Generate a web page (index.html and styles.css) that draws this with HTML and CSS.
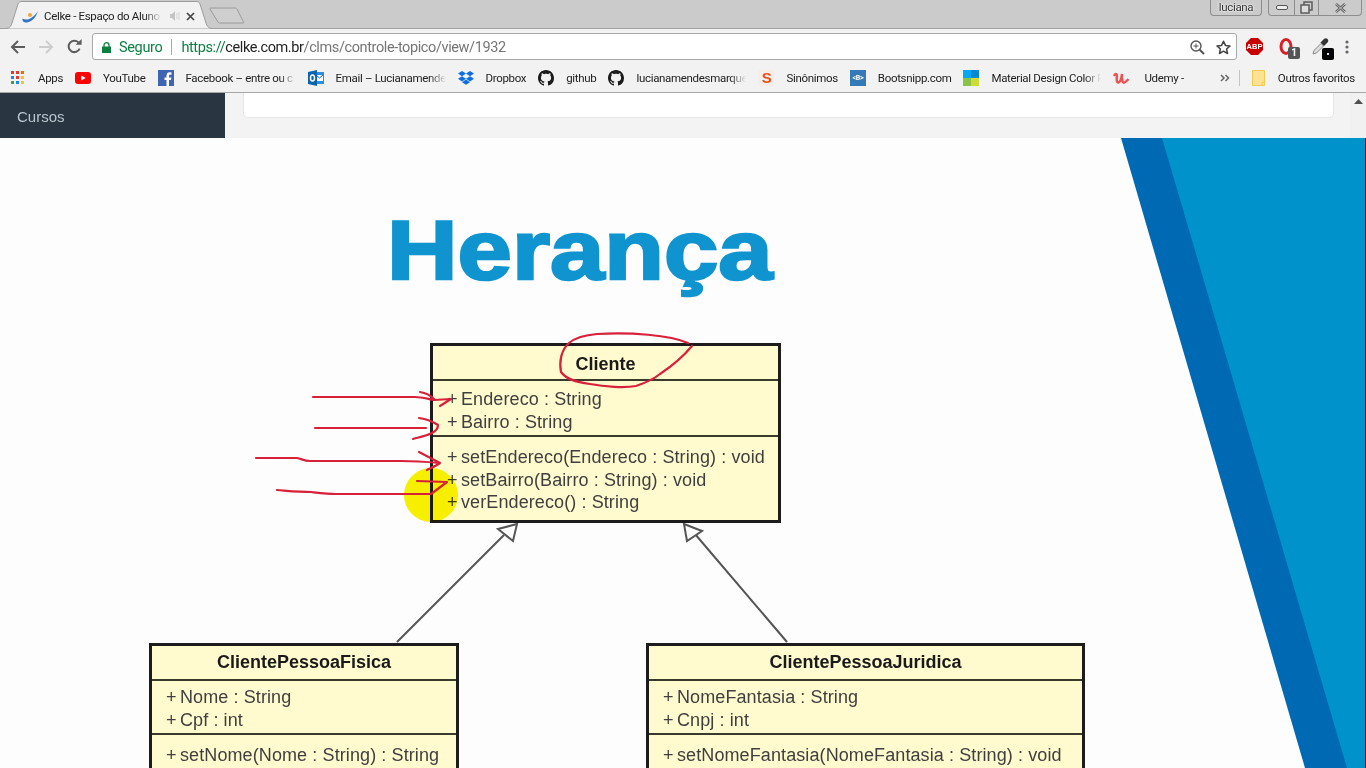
FILE: index.html
```html
<!DOCTYPE html>
<html lang="pt-BR">
<head>
    <meta charset="UTF-8">
    <meta name="viewport" content="width=device-width, initial-scale=1.0">
    <title>Celke - Espaço do Aluno</title>
    <link rel="stylesheet" href="styles.css">
</head>
<body>
    <svg class="defs" width="0" height="0">
        <symbol id="octocat" viewBox="0 0 16 16">
            <path fill="#1b1b1b" d="M8 0C3.58 0 0 3.58 0 8c0 3.54 2.29 6.53 5.47 7.59.4.07.55-.17.55-.38 0-.19-.01-.82-.01-1.49-2.01.37-2.53-.49-2.69-.94-.09-.23-.48-.94-.82-1.13-.28-.15-.68-.52-.01-.53.63-.01 1.08.58 1.23.82.72 1.21 1.87.87 2.33.66.07-.52.28-.87.51-1.07-1.78-.2-3.64-.89-3.64-3.95 0-.87.31-1.59.82-2.15-.08-.2-.36-1.02.08-2.12 0 0 .67-.21 2.2.82.64-.18 1.32-.27 2-.27.68 0 1.36.09 2 .27 1.53-1.04 2.2-.82 2.2-.82.44 1.1.16 1.92.08 2.12.51.56.82 1.27.82 2.15 0 3.07-1.87 3.75-3.65 3.95.29.25.54.73.54 1.48 0 1.07-.01 1.93-.01 2.2 0 .21.15.46.55.38A8.013 8.013 0 0016 8c0-4.42-3.58-8-8-8z"/>
        </symbol>
    </svg>

    <div class="tabstrip">
        <div class="tab">
            <svg class="tab-shape" width="206" height="29" viewBox="0 0 206 29">
                <path d="M0 28.500 C4 28 5 26 6 23 L12 4 C13 2 14 1.500 16 1.500 L190 1.500 C192 1.500 193 2 194 4 L200 23 C201 26 202 28 206 28.500" fill="#f2f2f2" stroke="#9c9c9c"/>
            </svg>
            <svg class="tab-icon" width="16" height="13" viewBox="0 0 16 13">
                <path d="M.5 8.500C0 12 3 13 6 12.300 10 11.300 14 7.500 16 1 13 5.500 9 9 5.500 9.500 3.500 9.800 1.800 9.500.5 8.500z" fill="#2f74c8"/>
                <circle cx="8" cy="5" r="2" fill="#f2a23a"/>
            </svg>
            <span class="tab-title">Celke - Espaço do Aluno</span>
            <svg class="tab-sound" width="10" height="10" viewBox="0 0 10 10">
                <path d="M0 3h2l3-3v10L2 7H0z" fill="#c4c4c4"/>
                <path d="M7 2v6M9 1v8" stroke="#d4d4d4"/>
            </svg>
            <svg class="tab-close" width="9" height="9" viewBox="0 0 9 9">
                <path d="M1 1l7 7M8 1L1 8" stroke="#444" stroke-width="1.700"/>
            </svg>
        </div>
        <svg class="newtab" width="36" height="18" viewBox="0 0 36 18">
            <path d="M1 2 C1 1 1 1 2 1 L26 1 C27 1 27 1 28 2 L34 14 C35 16 35 16 33 16 L11 16 C10 16 10 16 9 15 Z" fill="#cfcfcf" stroke="#9a9a9a"/>
        </svg>
        <div class="window-user">luciana</div>
        <div class="window-btns">
            <div class="window-btn min"><svg width="12" height="6" viewBox="0 0 12 6"><rect x="0.500" y="0.500" width="11" height="4" rx="1.500" fill="#eee" stroke="#555"/></svg></div>
            <div class="window-btn max"><svg width="13" height="13" viewBox="0 0 13 13"><rect x="4" y="1" width="8" height="8" fill="none" stroke="#555" stroke-width="1.400"/><rect x="1" y="4" width="8" height="8" fill="#ddd" stroke="#555" stroke-width="1.400"/></svg></div>
            <div class="window-btn close"><svg width="13" height="10" viewBox="0 0 13 10"><path d="M2 1l9 8M11 1l-9 8" stroke="#555" stroke-width="2.400"/><path d="M2 1l9 8M11 1l-9 8" stroke="#eee" stroke-width="0.800"/></svg></div>
        </div>
    </div>

    <div class="toolbar">
        <button class="nav-btn"><svg width="16" height="14" viewBox="0 0 16 14"><path d="M15 7H2M8 1L2 7l6 6" fill="none" stroke="#5c5c5c" stroke-width="2"/></svg></button>
        <button class="nav-btn"><svg width="16" height="14" viewBox="0 0 16 14"><path d="M1 7h13M8 1l6 6-6 6" fill="none" stroke="#cdcdcd" stroke-width="2"/></svg></button>
        <button class="nav-btn"><svg width="15" height="15" viewBox="0 0 15 15"><path d="M12.600 9.600A5.700 5.700 0 1 1 11.400 3.400" fill="none" stroke="#5c5c5c" stroke-width="2"/><path d="M8.600 5.800H14.600V0z" fill="#5c5c5c"/></svg></button>
        <div class="omnibox">
            <svg class="lock" width="9" height="11" viewBox="0 0 9 11"><path d="M2 5V3.200a2.500 2.500 0 0 1 5 0V5" fill="none" stroke="#0b8043" stroke-width="1.300"/><rect y="4.500" width="9" height="6.500" fill="#0b8043"/></svg>
            <span class="secure">Seguro</span>
            <span class="omni-sep"></span>
            <span class="url"><span class="url-scheme">https://</span><span class="url-host">celke.com.br</span>/clms/controle-topico/view/1932</span>
            <svg class="omni-zoom" width="15" height="15" viewBox="0 0 15 15"><circle cx="6" cy="6" r="5" fill="none" stroke="#555" stroke-width="1.400"/><path d="M9.700 9.700L14 14" stroke="#555" stroke-width="2"/><path d="M3.500 6h5M6 3.500v5" stroke="#555"/></svg>
            <svg class="omni-star" width="15" height="15" viewBox="0 0 15 15"><path d="M7.500 1.200l1.900 4.200 4.600.5-3.400 3.100.9 4.500-4-2.300-4 2.300.9-4.500L1 5.900l4.600-.5z" fill="none" stroke="#444" stroke-width="1.500" stroke-linejoin="round"/></svg>
        </div>
        <div class="extensions">
            <svg class="ext-abp" width="17" height="17" viewBox="0 0 17 17">
                <path d="M5 0h7l5 5v7l-5 5H5l-5-5V5z" fill="#c80000"/>
                <text x="8.500" y="11.200" text-anchor="middle">ABP</text>
            </svg>
            <div class="ext-opera">
                <svg width="15" height="17" viewBox="0 0 15 17"><ellipse cx="7" cy="8.500" rx="5" ry="7" fill="none" stroke="#d81f26" stroke-width="3"/></svg>
                <span class="ext-badge">1</span>
            </div>
            <div class="ext-dropper">
                <svg width="17" height="17" viewBox="0 0 17 17"><path d="M1 16l1-3.500 7-7 2.500 2.500-7 7z" fill="#ddd" stroke="#888"/><path d="M8.500 4.500l3.500-3.500c1-1 2.500-1 3.500 0s1 2.500 0 3.500L12 8z" fill="#333"/></svg>
                <span class="ext-black"><span class="ext-dot"></span></span>
            </div>
            <svg class="menu-dots" width="4" height="14" viewBox="0 0 4 14"><circle cx="2" cy="2" r="1.600" fill="#666"/><circle cx="2" cy="7" r="1.600" fill="#666"/><circle cx="2" cy="12" r="1.600" fill="#666"/></svg>
        </div>
    </div>

    <div class="bookmarks">
        <a class="bm bm-apps">
            <svg width="13" height="13" viewBox="0 0 13 13">
                <rect width="3" height="3" fill="#e53935"/><rect x="5" width="3" height="3" fill="#e53935"/><rect x="10" width="3" height="3" fill="#ef6c00"/>
                <rect y="5" width="3" height="3" fill="#1e88e5"/><rect x="5" y="5" width="3" height="3" fill="#e53935"/><rect x="10" y="5" width="3" height="3" fill="#fbc02d"/>
                <rect y="10" width="3" height="3" fill="#43a047"/><rect x="5" y="10" width="3" height="3" fill="#1e88e5"/><rect x="10" y="10" width="3" height="3" fill="#fbc02d"/>
            </svg>
            <span class="bm-label">Apps</span>
        </a>
        <a class="bm">
            <svg width="16" height="12" viewBox="0 0 16 12"><rect width="16" height="12" rx="3" fill="#f00"/><path d="M6.300 3.400l4.400 2.600-4.400 2.600z" fill="#fff"/></svg>
            <span class="bm-label">YouTube</span>
        </a>
        <a class="bm">
            <svg width="16" height="16" viewBox="0 0 16 16"><rect width="16" height="16" fill="#3f65b0"/><path d="M11 16V10h2l.4-2.500H11V6c0-.8.3-1.200 1.200-1.200h1.300V2.500C13 2.400 12.300 2.300 11.600 2.300 9.700 2.300 8.500 3.500 8.500 5.600V7.500H6.500V10h2v6z" fill="#fff"/></svg>
            <span class="bm-label fade">Facebook – entre ou c</span>
        </a>
        <a class="bm">
            <svg width="16" height="16" viewBox="0 0 16 16"><rect x="6" y="2" width="10" height="12" fill="#2f8fdc"/><path d="M8 5h7v6H8z" fill="#fff"/><path d="M8 5l3.500 3L15 5" fill="none" stroke="#0a64ad"/><path d="M0 2l9-2v16l-9-2z" fill="#0a64ad"/><ellipse cx="4.500" cy="8" rx="2" ry="3" fill="none" stroke="#fff" stroke-width="1.500"/></svg>
            <span class="bm-label fade">Email – Lucianamende</span>
        </a>
        <a class="bm">
            <svg width="16" height="16" viewBox="0 0 16 16"><path d="M4 1l4 2.600-4 2.600L0 3.600zM12 1l4 2.600-4 2.600-4-2.600zM4 6.200l4 2.600-4 2.600-4-2.600zM12 6.200l4 2.600-4 2.600-4-2.600zM4 12.200l4-2.600 4 2.600-4 2.600z" fill="#0d6fe0"/></svg>
            <span class="bm-label">Dropbox</span>
        </a>
        <a class="bm">
            <svg width="16" height="16"><use href="#octocat"/></svg>
            <span class="bm-label">github</span>
        </a>
        <a class="bm">
            <svg width="16" height="16"><use href="#octocat"/></svg>
            <span class="bm-label fade">lucianamendesmarque</span>
        </a>
        <a class="bm">
            <span class="fav-s">S</span>
            <span class="bm-label">Sinônimos</span>
        </a>
        <a class="bm">
            <span class="fav-b">&lt;B&gt;</span>
            <span class="bm-label">Bootsnipp.com</span>
        </a>
        <a class="bm">
            <svg width="16" height="16" viewBox="0 0 16 16"><rect width="8" height="8" fill="#03a9f4"/><rect x="8" width="8" height="8" fill="#0288d1"/><rect y="8" width="8" height="8" fill="#8bc34a"/><rect x="8" y="8" width="8" height="8" fill="#cddc39"/></svg>
            <span class="bm-label fade">Material Design Color P</span>
        </a>
        <a class="bm">
            <svg width="16" height="16" viewBox="0 0 16 16"><path d="M1 6C2 3.500 3.500 3.500 4 5.500 3.500 9 3.500 13 5.500 12.500 7.500 12 8.500 8 9 4 8.500 9 9.500 13.500 11.500 12.500 13 11.800 14 10.500 15.500 9" fill="none" stroke="#ec5252" stroke-width="2.400"/></svg>
            <span class="bm-label udemy">Udemy -</span>
        </a>
        <svg class="bm-more" width="10" height="8" viewBox="0 0 10 8"><path d="M1 1l3 3-3 3M5.500 1l3 3-3 3" fill="none" stroke="#666" stroke-width="1.500"/></svg>
        <span class="bm-sep"></span>
        <a class="bm bm-other">
            <svg width="13" height="16" viewBox="0 0 13 16"><path d="M.5.500h12v15H.5z" fill="#fde293" stroke="#f4c94e"/><path d="M10 15.500v-3h2.500" fill="none" stroke="#f4c94e"/></svg>
            <span class="bm-label">Outros favoritos</span>
        </a>
    </div>

    <div class="main">
        <div class="top-band">
            <div class="sidebar">Cursos</div>
            <div class="content">
                <div class="card"></div>
            </div>
            <div class="scrollbar">
                <svg width="9" height="5" viewBox="0 0 9 5"><path d="M0 5l4.500-5L9 5z" fill="#505050"/></svg>
            </div>
        </div>

        <div class="video">
            <svg class="wedge" width="1366" height="630" viewBox="0 138 1366 630">
                <path d="M1121 138H1366V768H1305z" fill="#0069b4"/>
                <path d="M1162 138H1366V768H1347z" fill="#0093cb"/>
                <rect x="1365" y="138" width="1" height="630" fill="#111"/>
            </svg>

            <div class="slide-title">Herança</div>

            <svg class="links" width="1366" height="630" viewBox="0 138 1366 630">
                <path d="M397 642L504 535M787 642L695 534" stroke="#555" stroke-width="2" fill="none"/>
                <path d="M517 524L498 529L513 541z" fill="#fdfdfd" stroke="#555" stroke-width="2"/>
                <path d="M684 524L702 531L687 541z" fill="#fdfdfd" stroke="#555" stroke-width="2"/>
            </svg>

            <div class="uml uml-cliente">
                <div class="uml-title">Cliente</div>
                <ul class="uml-rows">
                    <li><span class="vis">+</span>Endereco : String</li>
                    <li><span class="vis">+</span>Bairro : String</li>
                </ul>
                <ul class="uml-rows methods">
                    <li><span class="vis">+</span>setEndereco(Endereco : String) : void</li>
                    <li><span class="vis">+</span>setBairro(Bairro : String) : void</li>
                    <li><span class="vis">+</span>verEndereco() : String</li>
                </ul>
            </div>

            <div class="uml uml-fisica">
                <div class="uml-title">ClientePessoaFisica</div>
                <ul class="uml-rows low">
                    <li><span class="vis">+</span>Nome : String</li>
                    <li><span class="vis">+</span>Cpf : int</li>
                </ul>
                <ul class="uml-rows methods">
                    <li><span class="vis">+</span>setNome(Nome : String) : String</li>
                </ul>
            </div>

            <div class="uml uml-juridica">
                <div class="uml-title">ClientePessoaJuridica</div>
                <ul class="uml-rows low">
                    <li><span class="vis">+</span>NomeFantasia : String</li>
                    <li><span class="vis">+</span>Cnpj : int</li>
                </ul>
                <ul class="uml-rows methods">
                    <li><span class="vis">+</span>setNomeFantasia(NomeFantasia : String) : void</li>
                </ul>
            </div>

            <div class="pointer"></div>

            <svg class="ink" width="1366" height="630" viewBox="0 138 1366 630">
                <path d="M688 343C670 335 630 332 597 334C585 335 575 338 569 343C561 350 559 362 561 372C566 379 575 382 590 384C605 387 625 388 636 386C648 382 655 378 660 374C672 366 682 358 692 346"/>
                <path d="M313 397L415 397C422 397 428 399 434 400L451 399M420 392C426 393 430 395 434 399M451 399L440 406"/>
                <path d="M315 428L426 428M419 418C426 419 432 421 438 425C438 429 436 431 432 433C426 436 420 437 413 439"/>
                <path d="M256 458L297 458C302 459 304 461 310 461L401 461C415 461 428 462 440 463L419 452M440 463C436 466 431 468 427 470"/>
                <path d="M277 490C290 491 300 492 311 492C320 493 328 494 336 494L431 494L447 482L417 481"/>
            </svg>
        </div>
    </div>
</body>
</html>
```

FILE: styles.css
```css
html, body {
    margin: 0;
    height: 768px;
    overflow: hidden;
}
body {
    font-family: Roboto, "Liberation Sans", sans-serif;
    font-size: 11.500px;
    letter-spacing: -0.320px;
    color: #222;
    background-color: #f2f2f2;
}
.defs {
    display: block;
    height: 0;
}

/* tab strip */
.tabstrip {
    display: flex;
    height: 28px;
    background-color: #cbcbcb;
    border-bottom: 1px solid #a2a2a2;
}
.tab {
    position: relative;
    display: flex;
    align-items: center;
    width: 206px;
    height: 29px;
    margin-left: 6px;
    padding: 3px 0 0 16px;
    box-sizing: border-box;
}
.tab-shape {
    position: absolute;
    top: 0;
    left: 0;
}
.tab-icon,
.tab-title,
.tab-sound,
.tab-close {
    position: relative;
}
.tab-title {
    width: 118px;
    margin-left: 6px;
    white-space: nowrap;
    overflow: hidden;
    -webkit-mask-image: linear-gradient(to right, #000 85%, transparent);
    mask-image: linear-gradient(to right, #000 85%, transparent);
}
.tab-sound {
    margin-left: 8px;
}
.tab-close {
    margin-left: 6px;
}
.newtab {
    margin: 7px 0 0 -3px;
}
.window-user {
    width: 52px;
    height: 16px;
    margin-left: auto;
    box-sizing: border-box;
    border: 1px solid #8d8d8d;
    border-top: none;
    border-radius: 0 0 4px 4px;
    text-align: center;
    font-size: 11.500px;
    line-height: 15px;
    color: #333;
    text-shadow: 0 0 2px #fff, 0 0 2px #fff;
}
.window-btns {
    display: flex;
    height: 16px;
    margin: 0 4px 0 6px;
    box-sizing: border-box;
    border: 1px solid #8d8d8d;
    border-top: none;
    border-radius: 0 0 4px 4px;
}
.window-btn {
    display: flex;
    align-items: center;
    justify-content: center;
    border-left: 1px solid #8d8d8d;
}
.window-btn.min {
    width: 25px;
    border-left: none;
}
.window-btn.max {
    width: 23px;
}
.window-btn.close {
    width: 42px;
}

/* toolbar */
.toolbar {
    display: flex;
    align-items: center;
    height: 33px;
    padding: 2px 0 0 4px;
    box-sizing: border-box;
}
.nav-btn {
    display: flex;
    align-items: center;
    justify-content: center;
    width: 28px;
    height: 27px;
    padding: 0;
    border: none;
    background: none;
}
.omnibox {
    display: flex;
    align-items: center;
    flex: 1;
    height: 27px;
    margin-left: 4px;
    padding: 1px 5px 0 9px;
    box-sizing: border-box;
    background-color: #fff;
    border: 1px solid #a9a9a9;
    border-radius: 3px;
    font-size: 14.500px;
    letter-spacing: -0.350px;
    color: #757575;
}
.secure {
    margin-left: 8px;
    color: #0b8043;
}
.omni-sep {
    width: 1px;
    height: 16px;
    margin: 0 9px;
    background-color: #a9a9a9;
}
.url {
    flex: 1;
    letter-spacing: -0.390px;
}
.url-scheme {
    color: #0b8043;
}
.url-host {
    color: #222;
}
.omni-star {
    margin-left: 11px;
}
.extensions {
    display: flex;
    align-items: center;
    width: 129px;
    height: 27px;
    padding-left: 9px;
    box-sizing: border-box;
}
.ext-abp text {
    font-family: "Liberation Sans", sans-serif;
    font-size: 7.500px;
    font-weight: bold;
    letter-spacing: 0;
    fill: #fff;
}
.ext-opera,
.ext-dropper {
    position: relative;
    display: flex;
}
.ext-opera {
    margin-left: 16px;
}
.ext-dropper {
    margin-left: 18px;
}
.ext-badge {
    position: absolute;
    top: 9px;
    left: 9px;
    width: 12px;
    height: 12px;
    border-radius: 2px;
    background-color: #555;
    color: #fff;
    font-size: 10px;
    font-weight: bold;
    line-height: 12px;
    text-align: center;
}
.ext-black {
    position: absolute;
    top: 10px;
    left: 10px;
    display: flex;
    align-items: center;
    justify-content: center;
    width: 12px;
    height: 12px;
    border-radius: 2px;
    background-color: #000;
}
.ext-dot {
    width: 2px;
    height: 2px;
    background-color: #d8d8ff;
}
.menu-dots {
    margin-left: 16px;
}

/* bookmarks bar */
.bookmarks {
    display: flex;
    align-items: center;
    height: 31px;
    padding: 1px 0 0 11px;
    box-sizing: border-box;
    border-bottom: 1px solid #a8a8a8;
    white-space: nowrap;
}
.bm {
    display: flex;
    align-items: center;
    gap: 12px;
    margin-right: 12px;
}
.bm-apps {
    gap: 14px;
}
.bm-label.fade {
    display: block;
    width: 110px;
    -webkit-mask-image: linear-gradient(to right, #000 85%, transparent);
    mask-image: linear-gradient(to right, #000 85%, transparent);
}
.bm-label.udemy {
    margin-left: 3px;
}
.fav-s {
    width: 16px;
    height: 16px;
    background-color: #f3efe8;
    color: #ea4e1b;
    font-family: "Liberation Sans", sans-serif;
    font-size: 15px;
    font-weight: bold;
    line-height: 16px;
    text-align: center;
}
.fav-b {
    width: 16px;
    height: 16px;
    background-color: #337ab7;
    color: #fff;
    font-size: 7px;
    font-weight: bold;
    line-height: 16px;
    text-align: center;
}
.bm-more {
    margin-left: 24px;
}
.bm-sep {
    width: 1px;
    height: 16px;
    margin: 0 12px 0 9px;
    background-color: #c4c4c4;
}
.bm-other {
    gap: 13px;
    margin-right: 0;
}

/* page */
.main {
    height: 675px;
}
.top-band {
    display: flex;
    height: 45px;
    background-color: #f3f3f3;
}
.sidebar {
    width: 225px;
    padding: 15px 0 0 17px;
    box-sizing: border-box;
    background-color: #2a3542;
    color: #b8c7ce;
    font-family: "Liberation Sans", sans-serif;
    font-size: 15px;
    letter-spacing: 0;
}
.content {
    flex: 1;
    padding: 0 16px 0 18px;
}
.card {
    height: 25px;
    box-sizing: border-box;
    background-color: #fff;
    border: 1px solid #e6e6e6;
    border-top: none;
    border-radius: 0 0 5px 5px;
}
.scrollbar {
    display: flex;
    justify-content: center;
    width: 16px;
    padding-top: 6px;
    box-sizing: border-box;
    background-color: #f1f1f1;
}
.scrollbar svg {
    display: block;
}

/* video frame, a free canvas */
.video {
    position: relative;
    height: 630px;
    overflow: hidden;
    background-color: #fdfdfd;
}
.wedge,
.links,
.ink {
    position: absolute;
    top: 0;
    left: 0;
}
.ink path {
    fill: none;
    stroke: #d8203a;
    stroke-width: 2.200;
    stroke-linecap: round;
    stroke-linejoin: round;
}
.slide-title {
    position: absolute;
    top: 62px;
    left: 387px;
    font-family: "Liberation Sans", sans-serif;
    font-size: 84px;
    font-weight: bold;
    letter-spacing: 0;
    line-height: 100px;
    color: #0f94cf;
    -webkit-text-stroke: 2.500px #0f94cf;
    transform: scaleX(1.163);
    transform-origin: left top;
    filter: blur(0.500px);
}
.uml {
    position: absolute;
    box-sizing: border-box;
    background-color: #fffbcf;
    border: 3px solid #1c1c1c;
    font-family: "Liberation Sans", sans-serif;
    font-size: 18px;
    letter-spacing: 0.100px;
    color: #3f3f3f;
    filter: blur(0.500px);
}
.uml-cliente {
    top: 205px;
    left: 430px;
    width: 351px;
    height: 180px;
}
.uml-fisica {
    top: 505px;
    left: 149px;
    width: 310px;
    height: 200px;
}
.uml-juridica {
    top: 505px;
    left: 646px;
    width: 439px;
    height: 200px;
}
.uml-title {
    height: 33px;
    font-weight: bold;
    letter-spacing: 0;
    line-height: 33px;
    text-align: center;
    color: #1a1a1a;
}
.uml-cliente .uml-title {
    line-height: 37px;
}
.uml-rows {
    margin: 0;
    padding: 7px 0 2px 14px;
    list-style: none;
    border-top: 2px solid #3a3a2a;
    line-height: 22.500px;
}
.uml-rows.low {
    padding-top: 5px;
}
.uml-rows.methods {
    padding-top: 9px;
}
.vis {
    display: inline-block;
    width: 14px;
}
.pointer {
    position: absolute;
    top: 330px;
    left: 404px;
    width: 54px;
    height: 54px;
    border-radius: 50%;
    background-color: #f8f200;
    mix-blend-mode: multiply;
}
```
